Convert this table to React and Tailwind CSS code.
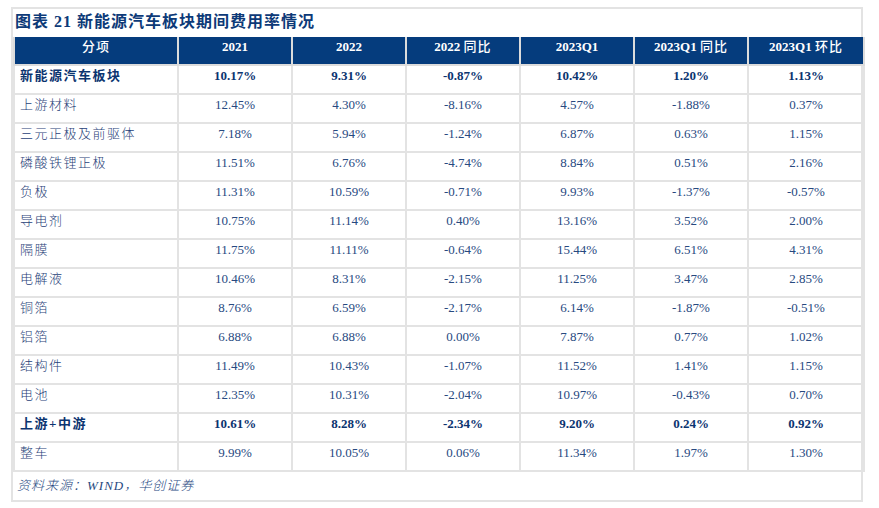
const headers = [
  ['', '分项'],
  ['2021', ''],
  ['2022', ''],
  ['2022 ', '同比'],
  ['2023Q1', ''],
  ['2023Q1 ', '同比'],
  ['2023Q1 ', '环比'],
];

const rows = [
  { name: '新能源汽车板块', bold: true, v: ['10.17%', '9.31%', '-0.87%', '10.42%', '1.20%', '1.13%'] },
  { name: '上游材料', v: ['12.45%', '4.30%', '-8.16%', '4.57%', '-1.88%', '0.37%'] },
  { name: '三元正极及前驱体', v: ['7.18%', '5.94%', '-1.24%', '6.87%', '0.63%', '1.15%'] },
  { name: '磷酸铁锂正极', v: ['11.51%', '6.76%', '-4.74%', '8.84%', '0.51%', '2.16%'] },
  { name: '负极', v: ['11.31%', '10.59%', '-0.71%', '9.93%', '-1.37%', '-0.57%'] },
  { name: '导电剂', v: ['10.75%', '11.14%', '0.40%', '13.16%', '3.52%', '2.00%'] },
  { name: '隔膜', v: ['11.75%', '11.11%', '-0.64%', '15.44%', '6.51%', '4.31%'] },
  { name: '电解液', v: ['10.46%', '8.31%', '-2.15%', '11.25%', '3.47%', '2.85%'] },
  { name: '铜箔', v: ['8.76%', '6.59%', '-2.17%', '6.14%', '-1.87%', '-0.51%'] },
  { name: '铝箔', v: ['6.88%', '6.88%', '0.00%', '7.87%', '0.77%', '1.02%'] },
  { name: '结构件', v: ['11.49%', '10.43%', '-1.07%', '11.52%', '1.41%', '1.15%'] },
  { name: '电池', v: ['12.35%', '10.31%', '-2.04%', '10.97%', '-0.43%', '0.70%'] },
  { name: '上游+中游', bold: true, v: ['10.61%', '8.28%', '-2.34%', '9.20%', '0.24%', '0.92%'] },
  { name: '整车', v: ['9.99%', '10.05%', '0.06%', '11.34%', '1.97%', '1.30%'] },
];

const serif = "font-['Liberation_Serif','Noto_Sans_CJK_SC',serif]";

const App = () => {
  return (
    <div className="w-[879px] h-[508px] bg-white pt-[7px] pl-[11px]">
      <div className="w-[852px] border-2 border-[#e3e3e3]">
        {/* Title */}
        <div className={`h-[28px] pl-[2px] pt-[3px] text-[16px] leading-[20px] font-bold tracking-[1px] text-[#0d3a78] ${serif}`}>
          图表 21 新能源汽车板块期间费用率情况
        </div>

        {/* Table */}
        <table className={`border-collapse table-fixed w-[850px] ${serif}`}>
          <colgroup>
            <col className="w-[164px]" />
            <col className="w-[114px]" />
            <col className="w-[114px]" />
            <col className="w-[114px]" />
            <col className="w-[114px]" />
            <col className="w-[114px]" />
            <col className="w-[116px]" />
          </colgroup>
          <thead>
            <tr className="h-[28px] bg-[#053c7d]">
              {headers.map(([num, zh]) => (
                <th
                  key={num + zh}
                  className="border-2 border-[#dcdcdc] border-t-0 align-top pt-[1px] text-[13px] leading-[18px] font-bold text-white text-center"
                >
                  {num}
                  {zh && <span className="font-medium tracking-[1px]">{zh}</span>}
                </th>
              ))}
            </tr>
          </thead>
          <tbody>
            {rows.map((r) => (
              <tr key={r.name} className="h-[29px]">
                <td
                  className={`border-2 border-[#e3e3e3] align-top pt-[1px] pl-[5px] text-[13px] leading-[18px] tracking-[1.5px] ${
                    r.bold ? 'font-bold text-[#0b3470]' : 'font-light text-[#1f4178]'
                  }`}
                >
                  {r.name}
                </td>
                {r.v.map((val, i) => (
                  <td
                    key={i}
                    className={`border-2 border-[#e3e3e3] align-top pt-[1px] text-center text-[13px] leading-[18px] ${
                      r.bold ? 'font-bold text-[#0b3470]' : 'text-[#27497f]'
                    }`}
                  >
                    {val}
                  </td>
                ))}
              </tr>
            ))}
          </tbody>
        </table>

        {/* Source */}
        <div className={`h-[28px] pl-[4px] pt-[5px] text-[13px] leading-[18px] italic font-light tracking-[1px] text-[#27497f] ${serif}`}>
          资料来源：WIND，华创证券
        </div>
      </div>
    </div>
  );
};

export default App;
